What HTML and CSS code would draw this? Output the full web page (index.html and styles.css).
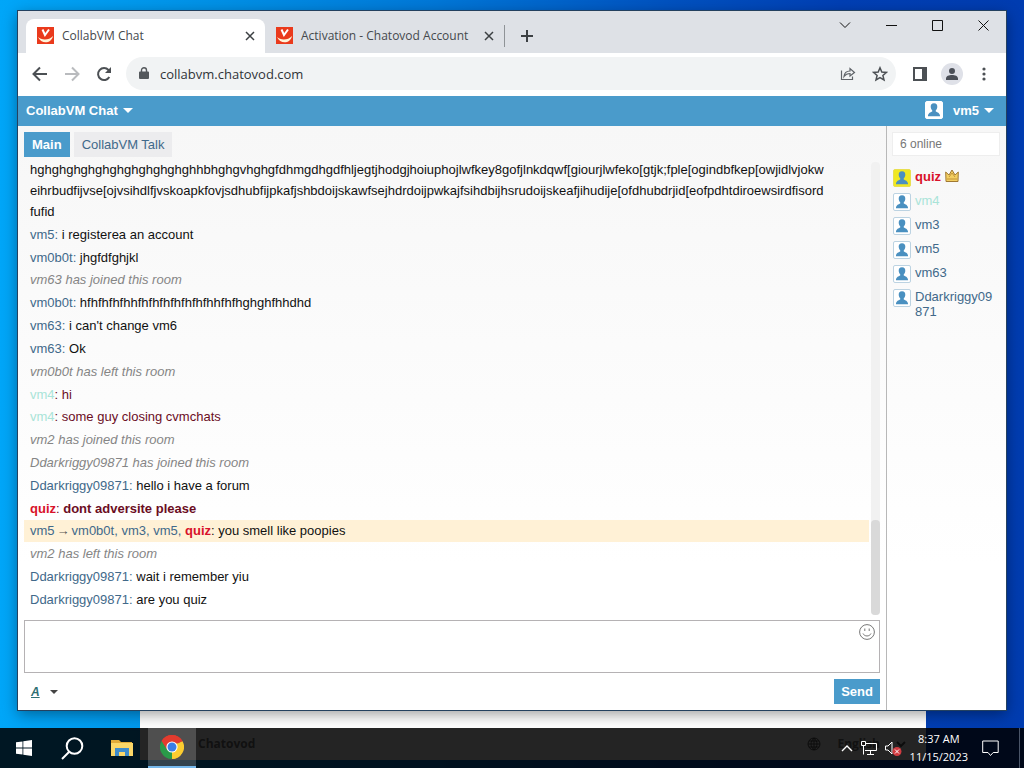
FILE: index.html
```html
<!DOCTYPE html>
<html lang="en">
<head>
	<meta charset="UTF-8">
	<meta name="viewport" content="width=device-width, initial-scale=1.0">
	<title>CollabVM Chat</title>
	<link rel="stylesheet" href="styles.css">
</head>
<body>
	<!-- icons used more than once -->
	<svg class="sprite" aria-hidden="true">
		<symbol id="favicon" viewBox="0 0 17 17">
			<rect width="17" height="17" fill="#ea3a1c"/>
			<path d="M5.500 2.500l2.500 5.500 4-5.500" fill="none" stroke="#fff" stroke-width="2"/>
			<path d="M1 10c3.500 3.500 11 3.500 15-1-1.500 8-12 8.500-15 1z" fill="#fff3d8"/>
		</symbol>
		<symbol id="cross" viewBox="0 0 10 10">
			<path d="M1 1l8 8M9 1l-8 8" fill="none" stroke="currentColor" stroke-width="1.500"/>
		</symbol>
		<symbol id="person" viewBox="0 0 18 18">
			<path d="M9 1.500c2.700 0 3.900 1.800 3.700 4.200-.1 1.700-.9 2.900-1.700 3.600v1.300c1.400 1 4.800 1.300 4.800 5.400H2.200c0-4.100 3.400-4.400 4.800-5.400V9.300C6.200 8.600 5.400 7.400 5.300 5.700 5.100 3.300 6.300 1.500 9 1.500z" fill="currentColor"/>
		</symbol>
	</svg>

	<div class="backWindow">
		<div class="backFooter">
			<span>Chatovod</span>
			<span class="lang">
				<svg width="14" height="14" viewBox="0 0 14 14"><circle cx="7" cy="7" r="6"/><path d="M1 7h12M7 1v12M2 4h10M2 10h10M7 1c-4 4-4 8 0 12M7 1c4 4 4 8 0 12"/></svg>
				English
				<svg width="10" height="8" viewBox="0 0 10 8"><path d="M1 2l4 4 4-4" stroke-width="2"/></svg>
			</span>
		</div>
	</div>

	<div class="desktop">
		<div class="window">
			<div class="tabStrip">
				<div class="tab active">
					<svg width="17" height="17"><use href="#favicon"/></svg>
					<span>CollabVM Chat</span>
					<button aria-label="Close tab"><svg width="10" height="10"><use href="#cross"/></svg></button>
				</div>
				<div class="tab">
					<svg width="17" height="17"><use href="#favicon"/></svg>
					<span>Activation - Chatovod Account</span>
					<button aria-label="Close tab"><svg width="10" height="10"><use href="#cross"/></svg></button>
				</div>
				<button class="newTab" aria-label="New tab"><svg width="12" height="12" viewBox="0 0 12 12"><path d="M6 0v12M0 6h12" stroke="#3c4043" stroke-width="2"/></svg></button>
				<div class="controls">
					<button aria-label="Search tabs"><svg width="12" height="12" viewBox="0 0 12 12"><path d="M1 3.500l5 5 5-5"/></svg></button>
					<button aria-label="Minimize"><svg width="11" height="11" viewBox="0 0 11 11"><path d="M0 5.500h11"/></svg></button>
					<button aria-label="Maximize"><svg width="11" height="11" viewBox="0 0 11 11"><path d="M.5.5h10v10H.5z"/></svg></button>
					<button aria-label="Close"><svg width="11" height="11" viewBox="0 0 11 11"><path d="M.5.5l10 10M10.500.5l-10 10"/></svg></button>
				</div>
			</div>

			<div class="toolbar">
				<button aria-label="Back"><svg width="16" height="16" viewBox="0 0 16 16"><path d="M15 8H2M8 1.500L1.500 8 8 14.500" stroke="#4c5054"/></svg></button>
				<button aria-label="Forward"><svg width="16" height="16" viewBox="0 0 16 16"><path d="M1 8h13M8 1.500L14.500 8 8 14.500" stroke="#b9bbbe"/></svg></button>
				<button aria-label="Reload"><svg width="16" height="16" viewBox="0 0 16 16"><path d="M13.300 11A6 6 0 1 1 12.500 4l1.500 1.600" stroke="#4c5054"/><path d="M15 1v6H9z" fill="#4c5054"/></svg></button>
				<div class="address">
					<svg width="10" height="13" viewBox="0 0 10 13"><path d="M1 4.500h8a1 1 0 0 1 1 1V11a1 1 0 0 1-1 1H1a1 1 0 0 1-1-1V5.500a1 1 0 0 1 1-1z" fill="#54585c"/><path d="M2.500 5V3.200a2.500 2.500 0 0 1 5 0V5" stroke="#54585c" stroke-width="1.400"/></svg>
					<input type="text" value="collabvm.chatovod.com" aria-label="Address">
					<button aria-label="Share"><svg width="16" height="16" viewBox="0 0 16 16"><path d="M1.500 4.500v9h11v-3M4 10.500c.4-4 2.600-5.500 6-5.500V2.500L14.500 6.500 10 10V7.500c-2.500 0-4.300.6-6 3z" stroke="#5f6368" stroke-width="1.200"/></svg></button>
					<button aria-label="Bookmark"><svg width="16" height="16" viewBox="0 0 16 16"><path d="M8 1.800l1.800 4.200 4.600.4-3.500 3 1.100 4.500L8 11.500l-4 2.400 1.100-4.500-3.500-3 4.600-.4z" stroke="#4c5054" stroke-width="1.500"/></svg></button>
				</div>
				<button class="panel" aria-label="Side panel"><svg width="14" height="14" viewBox="0 0 14 14"><path d="M0 0h14v14H0z" fill="#4c5054"/><path d="M2 2h7v10H2z" fill="#fff"/></svg></button>
				<button class="profile" aria-label="Profile"><svg width="14" height="14" viewBox="0 0 14 14"><path d="M7 1a3 3 0 0 1 0 6a3 3 0 0 1 0-6zM1 13v-1.500C1 9 4 8 7 8s6 1 6 3.500V13z" fill="#4c5058"/></svg></button>
				<button class="menu" aria-label="Menu"><svg width="4" height="14" viewBox="0 0 4 14"><g fill="#4c5054"><circle cx="2" cy="2" r="1.600"/><circle cx="2" cy="7" r="1.600"/><circle cx="2" cy="12" r="1.600"/></g></svg></button>
			</div>

			<div class="chatHeader">
				<button>CollabVM Chat <i class="caret"></i></button>
				<button class="me"><svg class="avatar" width="18" height="18"><use href="#person"/></svg> vm5 <i class="caret"></i></button>
			</div>

			<div class="chat">
				<div class="room">
					<div class="rooms">
						<a href="#main" class="current">Main</a>
						<a href="#talk">CollabVM Talk</a>
					</div>

					<div class="scroller">
						<div class="messages">
							<p>hghghghghghghghghghghghhbhghgvhghgfdhmgdhgdfhljegtjhodgjhoiuphojlwfkey8gofjlnkdqwf[giourjlwfeko[gtjk;fple[ogindbfkep[owjidlvjokw<br>eihrbudfijvse[ojvsihdlfjvskoapkfovjsdhubfijpkafjshbdoijskawfsejhdrdoijpwkajfsihdbijhsrudoijskeafjihudije[ofdhubdrjid[eofpdhtdiroewsirdfisord<br>fufid</p>
							<p><a href="#vm5">vm5:</a> i registerea an account</p>
							<p><a href="#vm0b0t">vm0b0t:</a> jhgfdfghjkl</p>
							<p class="event">vm63 has joined this room</p>
							<p><a href="#vm0b0t">vm0b0t:</a> hfhfhfhfhhfhfhfhfhfhfhfhhfhfhghghfhhdhd</p>
							<p><a href="#vm63">vm63:</a> i can't change vm6</p>
							<p><a href="#vm63">vm63:</a> Ok</p>
							<p class="event">vm0b0t has left this room</p>
							<p class="wine"><a href="#vm4" class="mint">vm4</a>: hi</p>
							<p class="wine"><a href="#vm4" class="mint">vm4</a>: some guy closing cvmchats</p>
							<p class="event">vm2 has joined this room</p>
							<p class="event">Ddarkriggy09871 has joined this room</p>
							<p><a href="#dd">Ddarkriggy09871:</a> hello i have a forum</p>
							<p class="wine"><a href="#quiz" class="owner">quiz</a>: <b>dont adversite please</b></p>
							<p class="private"><a href="#vm5">vm5</a><span class="arrow">→</span><a href="#vm0b0t">vm0b0t, vm3, vm5,</a> <a href="#quiz" class="owner">quiz</a>: you smell like poopies</p>
							<p class="event">vm2 has left this room</p>
							<p><a href="#dd">Ddarkriggy09871:</a> wait i remember yiu</p>
							<p><a href="#dd">Ddarkriggy09871:</a> are you quiz</p>
						</div>
						<div class="track"><div class="thumb"></div></div>
					</div>

					<div class="compose">
						<textarea aria-label="Message"></textarea>
						<button class="smile" aria-label="Smileys"><svg width="16" height="16" viewBox="0 0 16 16" fill="none" stroke="#777"><circle cx="8" cy="8" r="7.400"/><path d="M4 9.500c1.500 3.300 6.500 3.300 8 0M5.800 4.500v2.500M10.200 4.500v2.500"/></svg></button>
					</div>

					<div class="actions">
						<button class="format"><span>A</span> <i class="caret"></i></button>
						<button class="send">Send</button>
					</div>
				</div>

				<div class="sidebar">
					<input type="text" placeholder="6 online" aria-label="Search users">
					<ul>
						<li><svg class="avatar gold" width="18" height="18"><use href="#person"/></svg><a href="#quiz" class="owner">quiz</a>
							<svg class="crown" width="14" height="14" viewBox="0 0 14 14"><path d="M1 12.500L.7 3l3.300 3L7 1l3 5 3.300-3-.3 9.500z" fill="#f3cf62" stroke="#a07832"/><path d="M2 10h10M4 8l3-4 3 4" fill="none" stroke="#c4953b"/></svg></li>
						<li><svg class="avatar" width="18" height="18"><use href="#person"/></svg><a href="#vm4" class="mint">vm4</a></li>
						<li><svg class="avatar" width="18" height="18"><use href="#person"/></svg><a href="#vm3">vm3</a></li>
						<li><svg class="avatar" width="18" height="18"><use href="#person"/></svg><a href="#vm5">vm5</a></li>
						<li><svg class="avatar" width="18" height="18"><use href="#person"/></svg><a href="#vm63">vm63</a></li>
						<li><svg class="avatar" width="18" height="18"><use href="#person"/></svg><a href="#dd">Ddarkriggy09871</a></li>
					</ul>
				</div>
			</div>
		</div>
	</div>

	<div class="taskbar">
		<button aria-label="Start"><svg width="16" height="16" viewBox="0 0 16 16" fill="#fff"><path d="M0 2.300L6.500 1.400v6.200H0zM7.300 1.300L16 0v7.600H7.300zM0 8.400h6.500v6.200L0 13.700zM7.300 8.400H16V16l-8.700-1.300z"/></svg></button>
		<button aria-label="Search"><svg width="23" height="23" viewBox="0 0 23 23" fill="none" stroke="#fff" stroke-width="2"><circle cx="13.500" cy="9" r="7.800"/><path d="M8 15L1 22"/></svg></button>
		<button class="files" aria-label="File Explorer"><svg width="22" height="18" viewBox="0 0 22 18"><path d="M0 1h8l2 2h11v14H0z" fill="#e2ac3a"/><path d="M0 4h22v13H0z" fill="#fbd768"/><path d="M4 17V9h14v8h-4v-4H8v4z" fill="#3f8ccb"/></svg></button>
		<button class="running" aria-label="Chrome"><svg width="24" height="24" viewBox="0 0 24 24"><path d="M12 12L1.600 6A12 12 0 0 1 22.400 6z" fill="#e33b2e"/><path d="M12 12L22.400 6A12 12 0 0 1 12 24z" fill="#fccc30"/><path d="M12 12v12A12 12 0 0 1 1.600 6z" fill="#2a9a49"/><path d="M1.600 6L7.200 15 12 6.500h10.700L22.400 6A12 12 0 0 0 1.600 6z" fill="#e33b2e"/><path d="M12 24l5-9.500-1-6h6.700A12 12 0 0 1 12 24z" fill="#fccc30"/><circle cx="12" cy="12" r="5.600" fill="#fff"/><circle cx="12" cy="12" r="4.500" fill="#3b7de6"/></svg></button>
		<div class="tray">
			<svg width="12" height="8" viewBox="0 0 12 8"><path d="M1 7l5-5 5 5" stroke-width="1.400"/></svg>
			<svg width="16" height="14" viewBox="0 0 16 14"><path d="M5 2.500h10.500v7H4M9.500 9.500v4M6 13.500h7M.5.500h4v4h-4zM2.500 5v8.500"/></svg>
			<svg width="17" height="15" viewBox="0 0 17 15"><path d="M.5 5h2.500l4-4v12l-4-4H.5z"/><circle cx="12" cy="10.500" r="4.500" fill="#d13b40" stroke="none"/><path d="M10 8.500l4 4M14 8.500l-4 4"/></svg>
			<div class="clock">8:37 AM<br>11/15/2023</div>
			<svg class="notice" width="17" height="17" viewBox="0 0 17 17"><path d="M.7 1h15.500v11.500h-5L8.500 15.500 6 12.500H.7z"/></svg>
			<div class="peek"></div>
		</div>
	</div>
</body>
</html>
```
FILE: styles.css
```css
* { box-sizing: border-box; }

body {
	margin: 0;
	min-height: 100vh;
	display: flex;
	flex-direction: column;
	position: relative;
	font-family: "Liberation Sans", Arial, sans-serif;
	font-size: 13px;
	color: #111;
	background: linear-gradient(90deg, #00a6f8 0%, #0090e6 22%, #0078d8 42%, #0052c0 65%, #003fb4 82%, #003cb0 100%);
}

button {
	border: 0;
	padding: 0;
	background: none;
	font: inherit;
	color: inherit;
	display: flex;
	align-items: center;
	justify-content: center;
}

svg { display: block; flex: none; }
a { color: #41698a; text-decoration: none; }
.sprite { position: absolute; width: 0; height: 0; }

/* desktop */
.backWindow {
	position: absolute;
	left: 140px;
	right: 98px;
	bottom: 8px;
	height: 100px;
	background: #fff;
	display: flex;
	align-items: flex-end;
}

.backFooter {
	flex: 1;
	display: flex;
	justify-content: space-between;
	padding: 0 20px 7px 58px;
	font: bold 12px/18px "Open Sans", sans-serif;
	color: #777;
}

.lang { display: flex; align-items: center; gap: 16px; }
.lang svg { fill: none; stroke: #555; }

.desktop {
	flex: 1;
	display: flex;
	position: relative;
	padding: 11px 18px 18px;
}

.window {
	flex: 1;
	min-width: 0;
	display: flex;
	flex-direction: column;
	background: #fff;
	box-shadow: 0 0 0 1px #24415f, 0 4px 14px rgba(0,0,0,0.4);
}

/* browser */
.tabStrip {
	display: flex;
	height: 42px;
	padding: 8px 0 0 8px;
	background: #dee1e6;
	font: 12px "Open Sans", "Segoe UI", sans-serif;
	color: #45494d;
}

.tab {
	flex: 0 1 239px;
	display: flex;
	align-items: center;
	gap: 8px;
	padding: 0 10px 1px 11px;
	border-radius: 8px 8px 0 0;
	white-space: nowrap;
}

.tab span { flex: 1; }
.tab.active { background: #fff; }
.tab button { color: #3c4043; }
.newTab { width: 44px; height: 22px; margin-top: 6px; border-left: 1px solid #8f9397; }

.controls { display: flex; margin: -8px 0 0 auto; height: 28px; }
.controls button { width: 46px; }
.controls svg { fill: none; stroke: #111; }

.toolbar {
	display: flex;
	align-items: center;
	height: 43px;
	padding: 0 6px 2px;
	color: #4c5054;
}

.toolbar > button { width: 32px; height: 28px; }
.toolbar svg { fill: none; stroke-width: 2; }

.address {
	flex: 1;
	display: flex;
	align-items: center;
	height: 33px;
	margin: 0 8px 0 6px;
	padding: 0 0 0 13px;
	border-radius: 17px;
	background: #f1f3f4;
}

.address input {
	flex: 1;
	min-width: 0;
	border: 0;
	padding: 0 11px;
	background: none;
	font: 13px "Open Sans", "Segoe UI", sans-serif;
	color: #303438;
}

.address button { width: 32px; height: 28px; }

.toolbar .profile { width: 22px; height: 22px; margin: 0 5px; border-radius: 11px; background: #dfe1e8; }

.chatHeader {
	display: flex;
	justify-content: space-between;
	align-items: center;
	height: 30px;
	padding: 0 12px 2px 8px;
	background: #4a9bcb;
	color: #fff;
	font-weight: bold;
	text-shadow: 0 1px 1px #34708f;
}

.caret {
	border: 5px solid transparent;
	border-bottom: 0;
	border-top-color: currentColor;
	margin-left: 5px;
}

.avatar {
	border: 1px solid #bcd3e2;
	border-radius: 2px;
	background: #fff;
	color: #4a90c0;
}

.me .avatar { margin-right: 10px; border-color: #fff; }
.gold { background: #f0e820; border-color: #e8df50; }

/* chat */
.chat {
	flex: 1;
	display: flex;
	background: linear-gradient(#f7f7f7, #fff 75%);
}

.room {
	flex: 1;
	min-width: 0;
	display: flex;
	flex-direction: column;
	padding: 6px;
}

.rooms { display: flex; gap: 4px; }
.rooms a { padding: 0 8px; line-height: 25px; background: #ececee; }
.rooms .current { background: #4a9bcb; color: #fff; font-weight: bold; }

.scroller { flex: 1; display: flex; margin-top: 2px; }

.messages {
	flex: 1;
	min-width: 0;
	display: flex;
	flex-direction: column;
	justify-content: space-between;
	padding-bottom: 9px;
}

.messages p {
	margin: 0;
	padding: 0 6px 1px;
	line-height: 21px;
}

.messages .event { color: #858585; font-style: italic; }
.messages .wine { color: #6b0d1f; }
.messages .private { background: #fff1d6; }
.arrow { font-family: "Liberation Serif", serif; color: #555; padding: 0 2px; }

.mint, .messages .mint { color: #a9e4d8; }
.owner { color: #d8122a; font-weight: bold; }

.track {
	width: 9px;
	margin: 3px 0 5px 2px;
	display: flex;
	align-items: flex-end;
	border-radius: 4px;
	background: #f1f1f1;
}

.thumb { flex: 1; height: 21%; border-radius: 4px; background: #d9d9d9; }

.compose { position: relative; display: flex; }

.compose textarea {
	flex: 1;
	height: 53px;
	border: 1px solid #b5b2b4;
	padding: 6px 30px 6px 6px;
	background: #fff;
	font: inherit;
	resize: none;
}

.smile { position: absolute; top: 4px; right: 5px; }

.actions {
	display: flex;
	justify-content: space-between;
	margin-top: 6px;
}

.format { padding-left: 7px; color: #444; }
.format span { color: #2f6f72; font-style: italic; font-weight: bold; font-size: 12px; text-decoration: underline; }
.format .caret { border-width: 4px 4px 0; margin-left: 10px; }

.send {
	height: 25px;
	padding: 0 7px;
	background: #4a9bcb;
	color: #fff;
	font-weight: bold;
}

.sidebar {
	flex: none;
	width: 120px;
	padding: 6px 6px 6px 5px;
	border-left: 1px solid #b8b8b8;
}

.sidebar input {
	display: block;
	width: 100%;
	height: 24px;
	border: 1px solid #eee;
	padding: 0 7px;
	background: #fff;
	font: inherit;
	font-size: 12px;
}

.sidebar input::placeholder { color: #777; opacity: 1; }

.sidebar ul { list-style: none; margin: 13px 0 0; padding: 0 7px 0 1px; }

.sidebar li {
	display: flex;
	gap: 4px;
	min-height: 24px;
	line-height: 15px;
}

.sidebar li a { overflow-wrap: anywhere; }

/* taskbar */
.taskbar {
	position: relative;
	display: flex;
	height: 40px;
	background: rgba(0,0,0,0.86);
	color: #fff;
}

.taskbar button { width: 48px; }
.taskbar .files { width: 52px; }
.taskbar .running { background: rgba(255,255,255,0.2); border-bottom: 2px solid #76b9ed; }

.tray {
	display: flex;
	align-items: center;
	gap: 8px;
	margin-left: auto;
	padding-right: 4px;
}

.tray svg { fill: none; stroke: #fff; }
.clock { text-align: center; font: 11px/18px "Open Sans", "Segoe UI", sans-serif; }
.notice { margin: 0 12px 0 6px; }
.peek { align-self: stretch; border-left: 1px solid #4a5568; }
```
